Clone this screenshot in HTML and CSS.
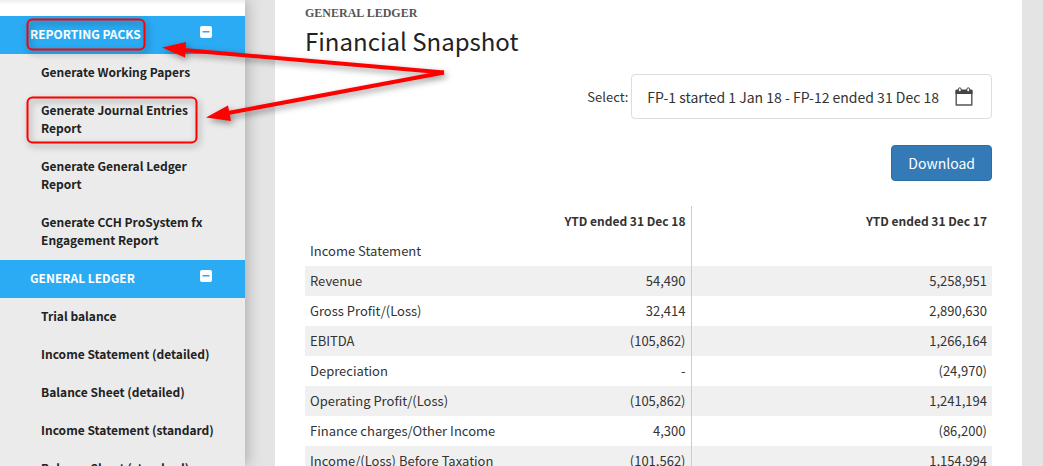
FILE: index.html
```
<!DOCTYPE html>
<html lang="en">

<head>
  <meta charset="UTF-8">
  <meta name="viewport" content="width=device-width, initial-scale=1.0">
  <title>Financial Snapshot</title>
  <link rel="stylesheet" href="styles.css">
</head>

<body>
  <div class="layout">
    <nav class="sidebar">
      <div class="sidebar-top"></div>
      <button class="group" type="button">
        <span>REPORTING PACKS</span>
        <svg class="minus" width="12" height="12" viewBox="0 0 12 12" aria-hidden="true">
          <rect width="12" height="12" rx="2" fill="#fff" />
          <rect x="2.500" y="5" width="7" height="1.500" fill="#2aabf3" />
        </svg>
      </button>
      <ul class="menu">
        <li><a href="#">Generate Working Papers</a></li>
        <li><a href="#">Generate Journal Entries Report</a></li>
        <li><a href="#">Generate General Ledger Report</a></li>
        <li><a href="#">Generate CCH ProSystem fx Engagement Report</a></li>
      </ul>
      <button class="group" type="button">
        <span>GENERAL LEDGER</span>
        <svg class="minus" width="12" height="12" viewBox="0 0 12 12" aria-hidden="true">
          <rect width="12" height="12" rx="2" fill="#fff" />
          <rect x="2.500" y="5" width="7" height="1.500" fill="#2aabf3" />
        </svg>
      </button>
      <ul class="menu">
        <li><a href="#">Trial balance</a></li>
        <li><a href="#">Income Statement (detailed)</a></li>
        <li><a href="#">Balance Sheet (detailed)</a></li>
        <li><a href="#">Income Statement (standard)</a></li>
        <li><a href="#">Balance Sheet (standard)</a></li>
      </ul>
    </nav>

    <main class="content">
      <div class="section">GENERAL LEDGER</div>
      <h1 class="title">Financial Snapshot</h1>
      <div class="period">
        <label for="period">Select:</label>
        <button class="picker" id="period" type="button">
          <span>FP-1 started 1 Jan 18 - FP-12 ended 31 Dec 18</span>
          <svg width="18" height="20" viewBox="0 0 18 20" aria-hidden="true">
            <path d="M1.2 4v14h15.600V4" fill="none" stroke="#555" stroke-width="1.400" stroke-linejoin="round" />
            <path d="M.5 3.500q0-1 1-1h15q1 0 1 1V7H.5z" fill="#444" />
            <rect x="3.500" y=".8" width="2.600" height="4" rx="1.300" fill="#fff" stroke="#444" />
            <rect x="11.900" y=".8" width="2.600" height="4" rx="1.300" fill="#fff" stroke="#444" />
          </svg>
        </button>
      </div>
      <div class="actions">
        <button class="download" type="button">Download</button>
      </div>
      <table class="report">
        <thead>
          <tr>
            <th class="name"></th>
            <th class="current">YTD ended 31 Dec 18</th>
            <th class="previous">YTD ended 31 Dec 17</th>
          </tr>
        </thead>
        <tbody>
          <tr><td>Income Statement</td><td></td><td></td></tr>
          <tr><td>Revenue</td><td>54,490</td><td>5,258,951</td></tr>
          <tr><td>Gross Profit/(Loss)</td><td>32,414</td><td>2,890,630</td></tr>
          <tr><td>EBITDA</td><td>(105,862)</td><td>1,266,164</td></tr>
          <tr><td>Depreciation</td><td>-</td><td>(24,970)</td></tr>
          <tr><td>Operating Profit/(Loss)</td><td>(105,862)</td><td>1,241,194</td></tr>
          <tr><td>Finance charges/Other Income</td><td>4,300</td><td>(86,200)</td></tr>
          <tr><td>Income/(Loss) Before Taxation</td><td>(101,562)</td><td>1,154,994</td></tr>
        </tbody>
      </table>
    </main>
  </div>

  <!-- callouts drawn over the page -->
  <svg class="callouts" width="460" height="160" viewBox="0 0 460 160" aria-hidden="true">
    <g fill="none" stroke="#f00" stroke-width="2">
      <rect x="27.500" y="19.500" width="117" height="30" rx="5" />
      <rect x="27.500" y="97.500" width="169" height="45" rx="5" />
    </g>
    <g fill="none" stroke="#f00" stroke-width="4">
      <path d="M444 72.500L184 50" />
      <path d="M444 72.500L228 113" />
    </g>
    <g fill="#f00">
      <path d="M162 47.500L186 42L185 57.500z" />
      <path d="M206 117.500L228 105.500L231 121z" />
    </g>
  </svg>
</body>

</html>
```

FILE: styles.css
```
* {
  box-sizing: border-box;
}

body {
  margin: 0;
  font-family: "Noto Sans CJK SC", "Open Sans", sans-serif;
  font-size: 13px;
  color: #333;
  background-color: #e4e4e4;
}

button {
  font: inherit;
  cursor: pointer;
}

.layout {
  display: flex;
  height: 100vh;
  overflow: hidden;
}

.sidebar {
  flex: 0 0 245px;
  background-color: #ebebeb;
  box-shadow: 2px 0 14px rgba(0, 0, 0, 0.25);
}

.sidebar-top {
  height: 16px;
  background: linear-gradient(#eee, #fff 5px);
}

.group {
  display: flex;
  justify-content: space-between;
  width: 100%;
  height: 38px;
  padding: 9px 33px 11px 30px;
  border: 0;
  color: #fff;
  font-size: 12px;
  font-weight: bold;
  line-height: 18px;
  background-color: #2aabf3;
}

.minus {
  margin-top: 1px;
}

.menu {
  margin: 0;
  padding: 0;
  list-style: none;
}

.menu a {
  display: block;
  padding: 9px 24px 11px 41px;
  color: #222;
  font-size: 12px;
  font-weight: bold;
  line-height: 18px;
  text-decoration: none;
}

.content {
  flex: 1;
  margin: 0 21px 0 30px;
  padding: 4px 30px 0;
  background-color: #fff;
}

.section {
  color: #555;
  font: bold 12px/18px "Liberation Serif", serif;
}

.title {
  margin: 0;
  color: #222;
  font-size: 24px;
  font-weight: 400;
  line-height: 38px;
}

.period {
  display: flex;
  align-items: center;
  justify-content: flex-end;
  gap: 3px;
  margin-top: 14px;
}

.picker {
  display: flex;
  align-items: center;
  gap: 16px;
  height: 45px;
  padding: 0 18px 0 15px;
  border: 1px solid #ddd;
  border-radius: 4px;
  color: #333;
  font-size: 14px;
  background-color: #fff;
}

.actions {
  display: flex;
  justify-content: flex-end;
  margin: 26px 0 25px;
}

.download {
  height: 36px;
  padding: 0 16px;
  border: 1px solid #2e6da4;
  border-radius: 4px;
  color: #fff;
  font-size: 14px;
  background-color: #337ab7;
}

.report {
  width: 100%;
  border-collapse: collapse;
  table-layout: fixed;
}

.report .name {
  width: 30%;
}

.report .previous {
  width: 301px;
}

.report th,
.report td {
  height: 30px;
  padding: 0 5px;
  line-height: 20px;
  text-align: right;
}

.report th {
  font-size: 12px;
}

.report td:first-child {
  text-align: left;
}

.report th:nth-child(2),
.report td:nth-child(2) {
  border-right: 1px solid #ccc;
}

.report tbody tr:nth-child(even) {
  background-color: #f0f0f0;
}

.callouts {
  position: absolute;
  top: 0;
  left: 0;
  pointer-events: none;
  filter: drop-shadow(2px 3px 3px rgba(0, 0, 0, 0.4));
}
```
